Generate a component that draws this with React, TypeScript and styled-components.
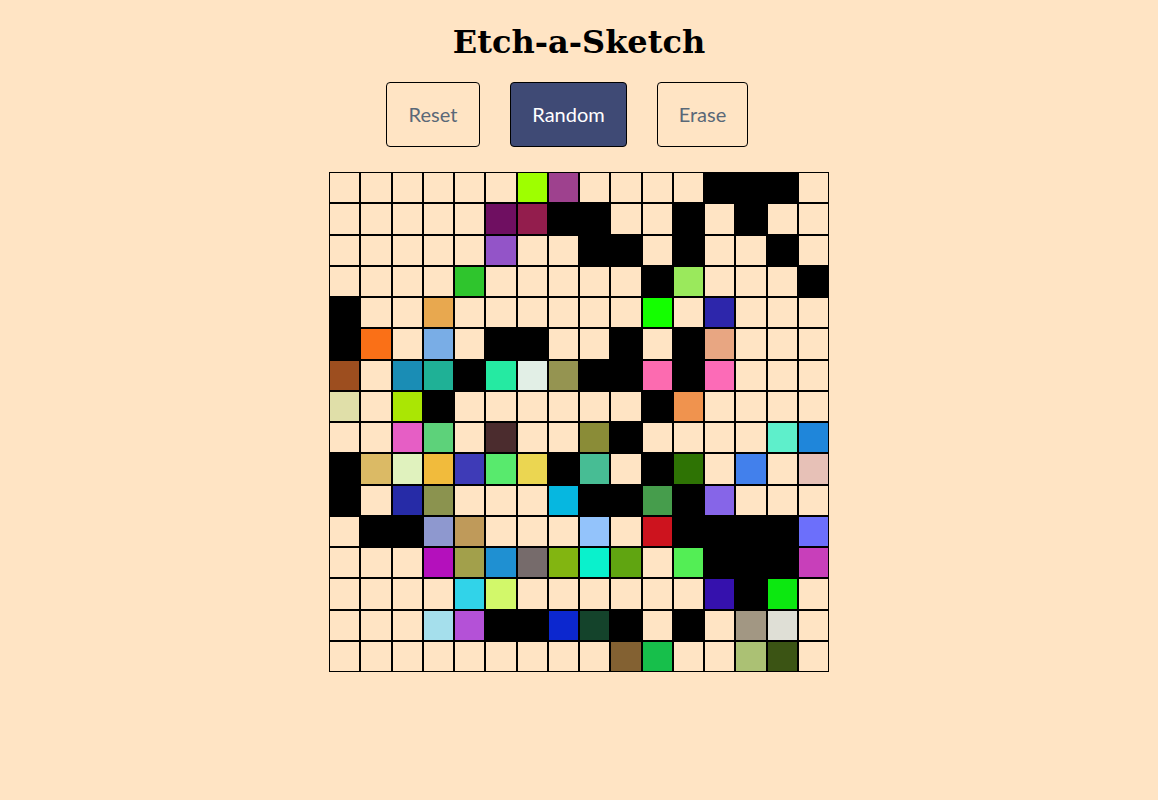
import React from "react";
import styled, { createGlobalStyle } from "styled-components";

const GlobalStyle = createGlobalStyle`
  html, body {
    margin: 0;
    padding: 0;
    background: #ffe4c4;
  }
  #root {
    min-height: 800px;
  }
`;

const Page = styled.main`
  display: flex;
  flex-direction: column;
  align-items: center;
`;

const Title = styled.h1`
  margin: 24px 0 0;
  font-family: "DejaVu Serif", "Liberation Serif", serif;
  font-weight: 700;
  font-size: 32px;
  line-height: 37px;
  color: #000;
`;

const Controls = styled.div`
  display: flex;
  gap: 30px;
  margin: 21px 24px 0 0;
`;

const Button = styled.button<{ $active?: boolean; $width: number }>`
  box-sizing: border-box;
  width: ${(p) => p.$width}px;
  height: 65px;
  padding: 0;
  border: 1px solid #000;
  border-radius: 4px;
  font-family: "Lato", "Open Sans", sans-serif;
  font-size: 20px;
  line-height: 23px;
  background: ${(p) => (p.$active ? "#3f4a75" : "transparent")};
  color: ${(p) => (p.$active ? "#ffffff" : "#5a6878")};
  cursor: pointer;
`;

const Board = styled.div`
  display: flex;
  flex-wrap: wrap;
  width: 500px;
  height: 500px;
  margin-top: 25px;
`;

const Cell = styled.div<{ $color: string }>`
  box-sizing: border-box;
  width: 31.25px;
  height: 31.25px;
  border: 1px solid #000;
  background: ${(p) => p.$color};
`;

const B = "";
const K = "k";

const rows: string[][] = [
  [B, B, B, B, B, B, "#9eff00", "#9e418e", B, B, B, B, K, K, K, B],
  [B, B, B, B, B, "#6f0f61", "#931d4d", K, K, B, B, K, B, K, B, B],
  [B, B, B, B, B, "#9354c8", B, B, K, K, B, K, B, B, K, B],
  [B, B, B, B, "#2fc52d", B, B, B, B, B, K, "#9ae95c", B, B, B, K],
  [K, B, B, "#e8a84f", B, B, B, B, B, B, "#14ff00", B, "#2d26ab", B, B, B],
  [K, "#fa7017", B, "#79ade6", B, K, K, B, B, K, B, K, "#e8a682", B, B, B],
  ["#9d4e1f", B, "#1a8db5", "#1fb196", K, "#25eaa2", "#e2efe6", "#959451", K, K, "#fc6bb0", K, "#fc6bb7", B, B, B],
  ["#e0dfa9", B, "#aae604", K, B, B, B, B, B, B, K, "#f0934e", B, B, B, B],
  [B, B, "#e65ec5", "#5dd27a", B, "#4b2c2e", B, B, "#8a8c37", K, B, B, B, B, "#5eefcb", "#1f86da"],
  [K, "#dbba65", "#e0f2be", "#f1bb3c", "#3e3bb7", "#58ea6d", "#ebd651", K, "#47bd94", B, K, "#2e7304", B, "#4280ec", B, "#e7c1b7"],
  [K, B, "#262ba7", "#8b934f", B, B, B, "#06b7e0", K, K, "#469d4c", K, "#8665e8", B, B, B],
  [B, K, K, "#8e98cf", "#bf9a5a", B, B, B, "#93c3fb", B, "#cd131e", K, K, K, K, "#6c6ffb"],
  [B, B, B, "#b410bc", "#a2a04b", "#1f90d2", "#766b6b", "#82b511", "#0af1cc", "#60a511", B, "#53ee55", K, K, K, "#c83fba"],
  [B, B, B, B, "#31d3e9", "#d2f86a", B, B, B, B, B, B, "#3511ad", K, "#0ce810", B],
  [B, B, B, "#a5dfec", "#b451d7", K, K, "#0c27cf", "#14432b", K, B, K, B, "#a29783", "#dfdfd6", B],
  [B, B, B, B, B, B, B, B, B, "#836132", "#17bf4b", B, B, "#abc174", "#3b5414", B],
];

const colorOf = (c: string) => (c === "" ? "#ffe4c4" : c === "k" ? "#000000" : c);

export default function App() {
  return (
    <>
      <GlobalStyle />
      <Page>
        <Title>Etch-a-Sketch</Title>
        <Controls>
          <Button $width={94}>Reset</Button>
          <Button $width={117} $active>
            Random
          </Button>
          <Button $width={91}>Erase</Button>
        </Controls>
        <Board>
          {rows.flatMap((row, r) =>
            row.map((c, i) => <Cell key={`${r}-${i}`} $color={colorOf(c)} />)
          )}
        </Board>
      </Page>
    </>
  );
}
